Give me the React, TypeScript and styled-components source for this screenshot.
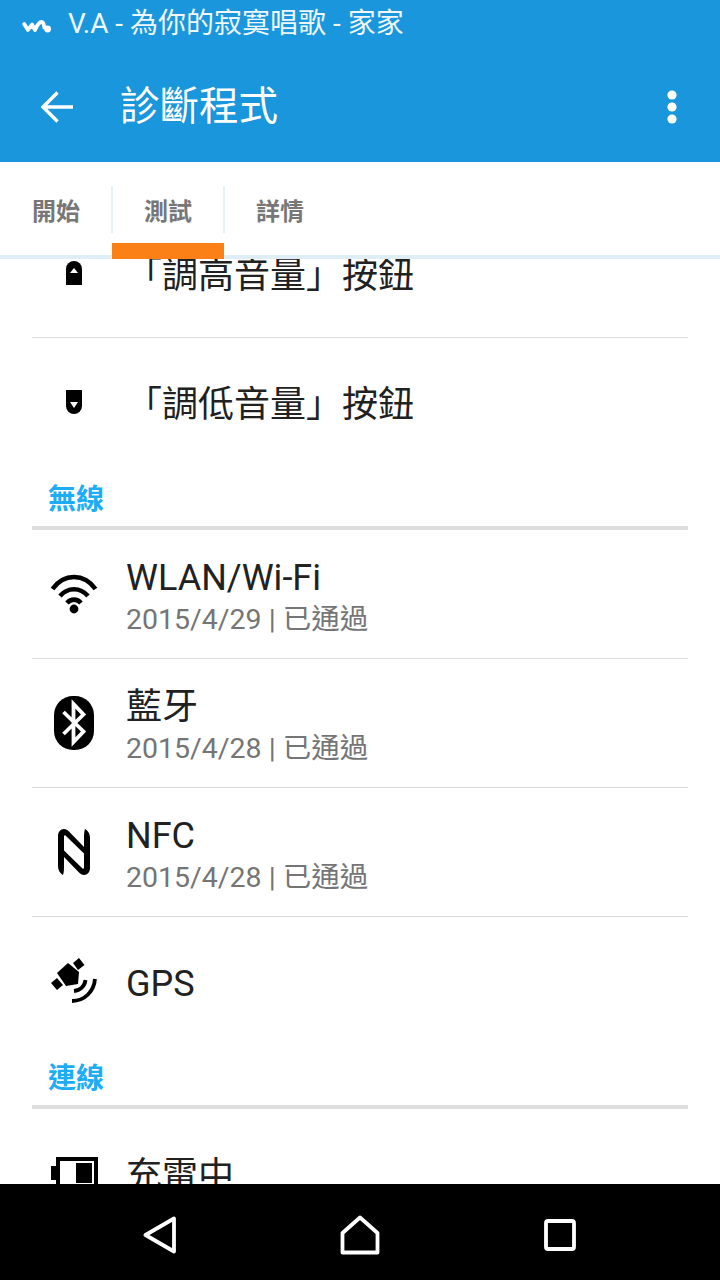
import React from 'react';
import styled, { createGlobalStyle } from 'styled-components';

const GlobalStyle = createGlobalStyle`
  html, body {
    margin: 0;
    padding: 0;
    background: #fff;
  }
  body {
    font-family: Roboto, "Noto Sans CJK TC", sans-serif;
  }
`;

const Phone = styled.div`
  width: 720px;
  height: 1280px;
  display: flex;
  flex-direction: column;
  overflow: hidden;
  background: #fff;
`;

const Header = styled.header`
  flex: none;
  background: #1a96dc;
  color: #fff;
`;

const StatusBar = styled.div`
  height: 52px;
  display: flex;
  align-items: center;
  padding-left: 22px;
  gap: 17px;
  font-size: 28px;
  line-height: 48px;
  color: #eef7fc;
`;

const NowPlaying = styled.span`
  margin-bottom: 4px;
`;

const Toolbar = styled.div`
  height: 110px;
  display: flex;
  align-items: center;
  padding: 0 43px 0 40px;
`;

const Title = styled.h1`
  flex: 1;
  margin: 0 0 0 46px;
  font-size: 39.5px;
  font-weight: 400;
  line-height: 50px;
`;

const TabBar = styled.nav`
  flex: none;
  height: 97px;
  box-sizing: border-box;
  display: flex;
  border-bottom: 4px solid #deedf6;
  background: #fff;
`;

const Tab = styled.div<{ $active?: boolean }>`
  position: relative;
  width: 112px;
  padding-top: 24px;
  box-sizing: border-box;

  ${({ $active }) => $active && `
    &::after {
      content: '';
      position: absolute;
      left: 0;
      right: 0;
      bottom: -4px;
      height: 16px;
      background: #fb8116;
    }
  `}
`;

const TabLabel = styled.div<{ $divider?: boolean }>`
  height: 47px;
  display: flex;
  align-items: center;
  justify-content: center;
  font-size: 24px;
  font-weight: 700;
  color: #777;
  box-shadow: ${({ $divider }) => ($divider ? '-1px 0 0 #e6f1f7, inset 1px 0 0 #e6f1f7' : 'none')};
`;

const Content = styled.main`
  flex: 1;
  min-height: 0;
  overflow: hidden;
`;

const ScrolledList = styled.div`
  margin-top: -50px;
`;

const Row = styled.div<{ $last?: boolean }>`
  height: 129px;
  box-sizing: border-box;
  margin: 0 32px;
  display: flex;
  align-items: center;
  border-bottom: 1px solid ${({ $last }) => ($last ? 'transparent' : '#dcdcdc')};
`;

const IconSlot = styled.div`
  flex: none;
  width: 84px;
  margin-right: 10px;
  display: flex;
  justify-content: center;
  align-items: center;
`;

const RowText = styled.div`
  display: flex;
  flex-direction: column;
  padding-top: 6px;
`;

const RowTitle = styled.div`
  font-size: 36px;
  line-height: 44px;
  color: #212121;
`;

const RowSub = styled.div`
  font-size: 28.5px;
  line-height: 36px;
  margin-top: 2px;
  color: #757575;
`;

const SectionHeader = styled.div`
  height: 59px;
  box-sizing: border-box;
  padding: 14px 0 0 48px;
  font-size: 28px;
  line-height: 38px;
  font-weight: 700;
  color: #1cadf5;
`;

const SectionRule = styled.div`
  height: 4px;
  margin: 0 32px;
  background: #dedede;
`;

const NavBar = styled.footer`
  flex: none;
  height: 96px;
  box-sizing: border-box;
  padding-top: 6px;
  background: #000;
  display: grid;
  grid-template-columns: repeat(3, 200px);
  justify-content: center;
  align-items: center;
`;

const NavButton = styled.div`
  display: flex;
  justify-content: center;
  align-items: center;
`;

const WalkmanIcon = () => (
  <svg width="29" height="13" viewBox="0 0 29 13">
    <path d="M2.2 4 L6 10 L10 4.5 L13 10 C15 5.5 17 2 19.5 2 C21.5 2 22 5 22.3 7.5" fill="none" stroke="#fff" strokeWidth="3.8" strokeLinecap="round" strokeLinejoin="round" />
    <circle cx="25.6" cy="9" r="3.4" fill="#fff" />
  </svg>
);

const BackArrow = () => (
  <svg width="34" height="34" viewBox="0 0 34 34">
    <path d="M33 17 H4 M17.5 2.5 L3 17 L17.5 31.5" fill="none" stroke="#fff" strokeWidth="3.4" />
  </svg>
);

const MoreDots = () => (
  <svg width="10" height="34" viewBox="0 0 10 34">
    <circle cx="5" cy="5" r="4.6" fill="#fff" />
    <circle cx="5" cy="17" r="4.6" fill="#fff" />
    <circle cx="5" cy="29" r="4.6" fill="#fff" />
  </svg>
);

const VolumeUpIcon = () => (
  <svg width="16" height="24" viewBox="0 0 16 24">
    <path d="M0 24 V8 A8 8 0 0 1 16 8 V24 Z" fill="#000" />
    <path d="M8 7 L12 12 H4 Z" fill="#fff" />
  </svg>
);

const VolumeDownIcon = () => (
  <svg width="16" height="24" viewBox="0 0 16 24">
    <path d="M0 0 V16 A8 8 0 0 0 16 16 V0 Z" fill="#000" />
    <path d="M8 18 L12 12 H4 Z" fill="#fff" />
  </svg>
);

const WifiIcon = () => (
  <svg width="48" height="40" viewBox="0 0 48 40">
    <g fill="none" stroke="#000" strokeWidth="4.6">
      <path d="M2.5 15 C14 -1 34 -1 45.5 15" />
      <path d="M10 22 C18 13 30 13 38 22" />
      <path d="M17 29 C21 24.5 27 24.5 31 29" />
    </g>
    <circle cx="24" cy="35" r="4.4" fill="#000" />
  </svg>
);

const BluetoothIcon = () => (
  <svg width="40" height="54" viewBox="0 0 40 54">
    <rect x="0" y="0" width="40" height="54" rx="19" fill="#000" />
    <path d="M9.5 16 L29.5 35.5 L19.5 46 V8 L29.5 18.5 L9.5 38" fill="none" stroke="#fff" strokeWidth="3.8" />
  </svg>
);

const NFC_HALF = 'M6 46 C3 44.5 1 41 1 37 V7 C1 3 3.5 0 7 0 C9 0 10.5 1 12 2.5 L27 18 V24.5 L8.5 6.5 C7.5 5.6 7 6.5 7 8 V36 C7 40 7 43 6 46 Z';

const NfcIcon = () => (
  <svg width="34" height="46" viewBox="0 0 34 46">
    <path d={NFC_HALF} fill="#000" />
    <path d={NFC_HALF} fill="#000" transform="rotate(180 17 23)" />
  </svg>
);

const GpsIcon = () => (
  <svg width="48" height="46" viewBox="0 0 48 46">
    <path d="M7 15 L18 5 L29 14 L28 26 L16 28 Z" fill="#000" />
    <path d="M23 5 L29 0 L34.5 7 L28 12 Z" fill="#000" />
    <path d="M1 25 L7 20 L13 27 L7 32 Z" fill="#000" />
    <path d="M24 33 C30 32.5 35 28 35.5 22" fill="none" stroke="#000" strokeWidth="3.8" />
    <path d="M22 43 C35 43 44 33 45 21" fill="none" stroke="#000" strokeWidth="3.8" />
  </svg>
);

const BatteryIcon = () => (
  <svg width="47" height="32" viewBox="0 0 47 32">
    <rect x="7" y="2" width="38" height="28" fill="none" stroke="#000" strokeWidth="4" />
    <rect x="0" y="9" width="5" height="14" fill="#000" />
    <rect x="25" y="6" width="16" height="20" fill="#000" />
  </svg>
);

const NavBack = () => (
  <svg width="34" height="38" viewBox="0 0 34 38">
    <path d="M31 2.5 V35.5 L2.5 19 Z" fill="none" stroke="#fff" strokeWidth="3.8" strokeLinejoin="round" />
  </svg>
);

const NavHome = () => (
  <svg width="40" height="40" viewBox="0 0 40 40">
    <path d="M2.5 37.5 V18 L20 2.5 L37.5 18 V37.5 Z" fill="none" stroke="#fff" strokeWidth="3.8" strokeLinejoin="round" />
  </svg>
);

const NavRecents = () => (
  <svg width="32" height="32" viewBox="0 0 32 32">
    <rect x="2" y="2" width="28" height="28" rx="2" fill="none" stroke="#fff" strokeWidth="3.8" />
  </svg>
);

type Item = { icon: React.ReactNode; title: string; sub?: string; last?: boolean };

const ListRow = ({ icon, title, sub, last }: Item) => (
  <Row $last={last}>
    <IconSlot>{icon}</IconSlot>
    <RowText>
      <RowTitle>{title}</RowTitle>
      {sub && <RowSub>{sub}</RowSub>}
    </RowText>
  </Row>
);

export default function App() {
  return (
    <Phone>
      <GlobalStyle />
      <Header>
        <StatusBar>
          <WalkmanIcon />
          <NowPlaying>V.A - 為你的寂寞唱歌 - 家家</NowPlaying>
        </StatusBar>
        <Toolbar>
          <BackArrow />
          <Title>診斷程式</Title>
          <MoreDots />
        </Toolbar>
      </Header>
      <TabBar>
        <Tab><TabLabel>開始</TabLabel></Tab>
        <Tab $active><TabLabel $divider>測試</TabLabel></Tab>
        <Tab><TabLabel $divider>詳情</TabLabel></Tab>
      </TabBar>
      <Content>
        <ScrolledList>
          <ListRow icon={<VolumeUpIcon />} title="「調高音量」按鈕" />
          <ListRow icon={<VolumeDownIcon />} title="「調低音量」按鈕" last />
          <SectionHeader>無線</SectionHeader>
          <SectionRule />
          <ListRow icon={<WifiIcon />} title="WLAN/Wi-Fi" sub="2015/4/29 | 已通過" />
          <ListRow icon={<BluetoothIcon />} title="藍牙" sub="2015/4/28 | 已通過" />
          <ListRow icon={<NfcIcon />} title="NFC" sub="2015/4/28 | 已通過" />
          <ListRow icon={<GpsIcon />} title="GPS" last />
          <SectionHeader>連線</SectionHeader>
          <SectionRule />
          <ListRow icon={<BatteryIcon />} title="充電中" />
        </ScrolledList>
      </Content>
      <NavBar>
        <NavButton><NavBack /></NavButton>
        <NavButton><NavHome /></NavButton>
        <NavButton><NavRecents /></NavButton>
      </NavBar>
    </Phone>
  );
}
